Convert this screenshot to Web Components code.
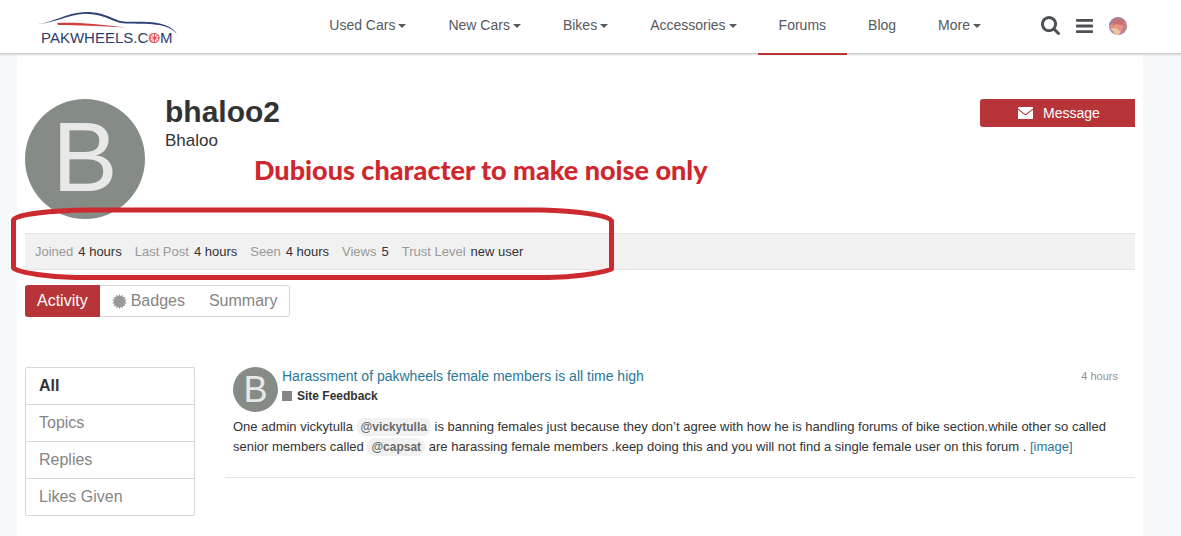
<!DOCTYPE html>
<html lang="en">
<head>
<meta charset="utf-8">
<meta name="viewport" content="width=device-width, initial-scale=1">
<title>bhaloo2 - PakWheels Forums</title>
<style>
  body {
    margin: 0;
    min-height: 100vh;
    background: #f7f8fa;
    color: #333;
    font-family: "Liberation Sans", Arial, sans-serif;
    font-size: 13px;
    --accent: #b73439;
    --link: #2a7799;
    --line: #d8d8d8;
    --muted: #858585;
  }
</style>
</head>
<body>

<site-header>
  <nav-item menu>Used Cars</nav-item>
  <nav-item menu>New Cars</nav-item>
  <nav-item menu>Bikes</nav-item>
  <nav-item menu>Accessories</nav-item>
  <nav-item active>Forums</nav-item>
  <nav-item>Blog</nav-item>
  <nav-item menu>More</nav-item>
</site-header>

<profile-page>
  <profile-header slot="header" username="bhaloo2" name="Bhaloo"></profile-header>

  <stat-bar slot="stats">
    <stat-item label="Joined">4 hours</stat-item>
    <stat-item label="Last Post">4 hours</stat-item>
    <stat-item label="Seen">4 hours</stat-item>
    <stat-item label="Views">5</stat-item>
    <stat-item label="Trust Level">new user</stat-item>
  </stat-bar>

  <tab-bar slot="tabs">
    <tab-link active>Activity</tab-link>
    <tab-link><fa-icon name="certificate"></fa-icon>Badges</tab-link>
    <tab-link>Summary</tab-link>
  </tab-bar>

  <side-nav slot="side">
    <side-link active>All</side-link>
    <side-link>Topics</side-link>
    <side-link>Replies</side-link>
    <side-link>Likes Given</side-link>
  </side-nav>

  <stream-item category="Site Feedback" when="4 hours">
    <span slot="title">Harassment of pakwheels female members is all time high</span>
    One admin vickytulla <user-mention>@vickytulla</user-mention> is banning females just because they don’t agree with how he is handling forums of bike section.while other so called senior members called <user-mention>@capsat</user-mention> are harassing female members .keep doing this and you will not find a single female user on this forum . <text-link>[image]</text-link>
  </stream-item>

  <pen-note slot="note">Dubious character to make noise only</pen-note>
</profile-page>

<script>
// Small helper: define an element whose shadow root comes from a template
function define(name, html, setup) {
  const template = document.createElement('template');
  template.innerHTML = html;

  customElements.define(name, class extends HTMLElement {
    constructor() {
      super();
      this.attachShadow({ mode: 'open' });
      this.shadowRoot.appendChild(template.content.cloneNode(true));
    }

    connectedCallback() {
      if (setup) setup(this, this.shadowRoot);
    }
  });
}

// Pointed burst for the badges icon
function burst(points, outer, inner) {
  return Array.from({ length: points * 2 }, (_, i) => {
    const r = i % 2 ? inner : outer;
    const a = Math.PI * i / points;
    return `${(8 + r * Math.sin(a)).toFixed(2)} ${(8 - r * Math.cos(a)).toFixed(2)}`;
  }).join('L');
}

const icons = {
  search: {
    box: '64 128 1664 1664', w: 19, h: 19,
    d: 'M1216 832q0-185-131.5-316.5T768 384 451.5 515.5 320 832t131.5 316.5T768 1280t316.5-131.5T1216 832zm512 832q0 52-38 90t-90 38q-54 0-90-38l-343-342q-179 124-399 124-143 0-273.5-55.5t-225-150-150-225T64 832t55.5-273.5 150-225 225-150T768 128t273.5 55.5 225 150 150 225T1472 832q0 220-124 399l343 343q37 37 37 90z'
  },
  bars: {
    box: '128 256 1536 1280', w: 17, h: 14,
    d: 'M1664 1344v128q0 26-19 45t-45 19H192q-26 0-45-19t-19-45v-128q0-26 19-45t45-19h1408q26 0 45 19t19 45zm0-512v128q0 26-19 45t-45 19H192q-26 0-45-19t-19-45V832q0-26 19-45t45-19h1408q26 0 45 19t19 45zm0-512v128q0 26-19 45t-45 19H192q-26 0-45-19t-19-45V320q0-26 19-45t45-19h1408q26 0 45 19t19 45z'
  },
  envelope: {
    box: '0 0 14 11', w: 15, h: 12,
    d: 'M0 .6Q0 0 .6 0H13.4Q14 0 14 .6V1.4L7.6 6.2Q7 6.6 6.4 6.2L0 1.4ZM0 2.5L6 7.1Q7 7.8 8 7.1L14 2.5V10.4Q14 11 13.4 11H.6Q0 11 0 10.4Z'
  },
  certificate: {
    box: '0 0 16 16', w: 15, h: 15,
    d: 'M' + burst(14, 8, 5.8) + 'Z'
  }
};

define('fa-icon', `
  <style>
    :host { display: inline-block; line-height: 0; }
    svg { display: block; fill: currentColor; }
  </style>
  <svg aria-hidden="true"><path/></svg>
`, (el, root) => {
  const icon = icons[el.getAttribute('name')];
  const svg = root.querySelector('svg');
  svg.setAttribute('viewBox', icon.box);
  svg.setAttribute('width', icon.w);
  svg.setAttribute('height', icon.h);
  svg.setAttribute('preserveAspectRatio', 'none');
  root.querySelector('path').setAttribute('d', icon.d);
});

define('site-logo', `
  <style>
    :host { display: block; }
    a, svg { display: block; }
    text { font: 15px "Liberation Sans", Arial, sans-serif; fill: #2c3d6b; }
    .o { fill: #e0404a; }
  </style>
  <a href="#" aria-label="PakWheels home">
    <svg width="142" height="36" viewBox="0 0 142 36">
      <path d="M0 14C17 12 27 3 47 2C68 1.500 76 11 86 11.500C100 13 128 8 139 24C129 12 110 14.500 88 13.500C74 13 68 4 47 3.800C28 5 18 13 0 14Z" fill="#2c4377"/>
      <path d="M19 13C38 12 58 14 88 17.500C60 16 40 15 20 15Z" fill="#cf3f3f"/>
      <text x="3" y="33">PAKWHEELS.C<tspan class="o">O</tspan>M</text>
      <circle cx="116.500" cy="28" r="5" fill="#fff"/>
      <g fill="none" stroke="#e0404a">
        <circle cx="116.500" cy="28" r="4.500"/>
        <circle cx="116.500" cy="28" r="1"/>
        <path d="M116.500 23V33M111.500 28H121.500M113 24.500L120 31.500M120 24.500L113 31.500" stroke-width=".8"/>
      </g>
    </svg>
  </a>
`);

define('nav-item', `
  <style>
    :host { display: block; font-size: 14px; line-height: 18px; }
    a {
      display: flex;
      align-items: center;
      gap: 3px;
      padding: 16px 21px 19px;
      border-bottom: 2px solid transparent;
      color: #56595e;
      text-decoration: none;
    }
    :host([active]) a { border-color: var(--accent); }
    i { display: none; margin-top: 2px; border: 4px solid transparent; border-top-color: currentColor; border-bottom: 0; }
    :host([menu]) i { display: block; }
  </style>
  <a href="#"><slot></slot><i></i></a>
`);

define('site-header', `
  <style>
    :host { display: block; position: relative; z-index: 1; }
    header {
      display: flex;
      height: 53px;
      padding: 0 54px 0 38px;
      background: #fff;
      border-bottom: 1px solid #ccc;
      box-shadow: 0 1px 2px rgba(0, 0, 0, .15);
    }
    site-logo { margin-top: 10px; }
    nav { display: flex; margin-left: auto; }
    .tools { display: flex; align-items: center; gap: 16px; margin-left: 39px; padding-bottom: 2px; color: #4d5055; }
    button { display: flex; padding: 0; border: 0; background: none; color: inherit; }
    .me { border-radius: 50%; overflow: hidden; }
    .me svg { display: block; }
  </style>
  <header>
    <site-logo></site-logo>
    <nav aria-label="Main"><slot></slot></nav>
    <div class="tools">
      <button aria-label="Search"><fa-icon name="search"></fa-icon></button>
      <button aria-label="Menu"><fa-icon name="bars"></fa-icon></button>
      <button class="me" aria-label="Account">
        <svg width="18" height="18" viewBox="0 0 18 18">
          <rect width="18" height="18" fill="#c98a90"/>
          <path d="M0 0H18V6L12 4L6 6L0 8Z" fill="#a486a4"/>
          <path d="M5 2L14 3L16 9L9 7L3 10Z" fill="#cf6f6c"/>
          <path d="M1 9L8 7L15 10L13 15L6 12Z" fill="#e8937d"/>
          <path d="M2 11L7 11L12 15L9 18H4Z" fill="#f0c5a2"/>
          <path d="M0 11L4 14L6 18H0Z" fill="#9a91b8"/>
          <path d="M14 10L18 8V18H11Z" fill="#bd828e"/>
        </svg>
      </button>
    </div>
  </header>
`);

define('user-avatar', `
  <style>
    :host {
      display: flex;
      flex: none;
      align-items: center;
      justify-content: center;
      width: 45px;
      height: 45px;
      border-radius: 50%;
      background: #858c85;
      color: #e8e8e8;
      font-size: 36px;
      line-height: 45px;
    }
    :host([large]) { width: 120px; height: 120px; font-size: 98px; line-height: 116px; align-items: flex-start; }
  </style>
  <span>B</span>
`);

define('profile-header', `
  <style>
    :host { display: flex; gap: 20px; align-items: flex-start; }
    h1 { margin: 0 0 6px; font-size: 30px; line-height: 26px; }
    h2 { margin: 0; font-size: 17px; line-height: 20px; font-weight: normal; }
    button {
      display: flex;
      align-items: center;
      justify-content: center;
      gap: 10px;
      width: 155px;
      height: 28px;
      margin-left: auto;
      padding: 0 0 0 3px;
      border: 0;
      border-radius: 3px 0 0 3px;
      background: var(--accent);
      color: #fff;
      font: 14px "Liberation Sans", Arial, sans-serif;
    }
  </style>
  <user-avatar large></user-avatar>
  <div>
    <h1></h1>
    <h2></h2>
  </div>
  <button><fa-icon name="envelope"></fa-icon>Message</button>
`, (el, root) => {
  root.querySelector('h1').textContent = el.getAttribute('username');
  root.querySelector('h2').textContent = el.getAttribute('name');
});

define('stat-item', `
  <style>
    :host { display: flex; gap: 5px; }
    dt { color: #999; }
    dd { margin: 0; }
  </style>
  <dt></dt>
  <dd><slot></slot></dd>
`, (el, root) => {
  root.querySelector('dt').textContent = el.getAttribute('label');
});

define('stat-bar', `
  <style>
    :host { display: block; background: #f1f1f1; border: solid #e5e5e5; border-width: 1px 0; }
    dl { display: flex; flex-wrap: wrap; gap: 13px; margin: 0; padding: 8px 10px 7px; line-height: 20px; }
  </style>
  <dl><slot></slot></dl>
`);

define('tab-link', `
  <style>
    :host { display: block; font-size: 16px; line-height: 30px; }
    a { display: flex; align-items: center; gap: 4px; padding: 0 12px; color: var(--muted); text-decoration: none; }
    :host([active]) { margin: -1px 0 -1px -1px; line-height: 32px; }
    :host([active]) a { background: var(--accent); color: #fff; border-radius: 3px 0 0 3px; }
    ::slotted(fa-icon) { color: #999; }
  </style>
  <a href="#"><slot></slot></a>
`);

define('tab-bar', `
  <style>
    :host { display: flex; }
    nav { display: flex; border: 1px solid var(--line); border-radius: 3px; }
  </style>
  <nav aria-label="Profile"><slot></slot></nav>
`);

define('side-link', `
  <style>
    :host { display: block; border-bottom: 1px solid var(--line); }
    a { display: block; padding: 0 13px; color: var(--muted); font-size: 16px; line-height: 36px; text-decoration: none; }
    :host([active]) a { color: #333; font-weight: bold; }
  </style>
  <a href="#"><slot></slot></a>
`);

define('side-nav', `
  <style>
    :host { display: block; border: 1px solid var(--line); border-bottom: 0; border-radius: 2px; }
  </style>
  <nav aria-label="Activity filter"><slot></slot></nav>
`);

define('text-link', `
  <style>
    :host { display: inline; }
    a { color: var(--link); text-decoration: none; }
  </style>
  <a href="#"><slot></slot></a>
`);

define('user-mention', `
  <style>
    :host { display: inline; }
    a { padding: 2px 4px; border-radius: 8px; background: #f1f1f1; color: #6b6b6b; font-size: 12px; font-weight: bold; text-decoration: none; }
  </style>
  <a href="#"><slot></slot></a>
`);

define('stream-item', `
  <style>
    :host { display: block; padding: 0 0 20px 8px; border-bottom: 1px solid #e5e5e5; }
    .top { display: flex; gap: 4px; }
    .title { display: block; font-size: 14px; line-height: 19px; }
    .category { display: flex; align-items: center; gap: 5px; font-size: 12px; font-weight: bold; line-height: 20px; }
    .category::before { content: ""; width: 10px; height: 10px; background: #858585; }
    time { margin-left: auto; padding-right: 17px; color: #919191; font-size: 11px; line-height: 19px; }
    p { margin: 5px 20px 0 0; line-height: 20px; }
  </style>
  <article>
    <div class="top">
      <user-avatar></user-avatar>
      <div>
        <text-link class="title"><slot name="title"></slot></text-link>
        <div class="category"></div>
      </div>
      <time></time>
    </div>
    <p><slot></slot></p>
  </article>
`, (el, root) => {
  root.querySelector('.category').textContent = el.getAttribute('category');
  root.querySelector('time').textContent = el.getAttribute('when');
});

// Freehand red marker: a caption and a loop drawn over the stats
define('pen-note', `
  <style>
    :host { display: block; position: absolute; left: -6px; top: 96px; pointer-events: none; }
    p { margin: 0 0 0 243px; color: #cf272e; font: 900 27px/40px Lato, Calibri, sans-serif; white-space: nowrap; }
    svg { display: block; margin-top: 16px; }
  </style>
  <p><slot></slot></p>
  <svg width="606" height="78" viewBox="0 0 606 78" fill="none" stroke="#cc2a2f" stroke-width="5" stroke-linejoin="round">
    <path d="M2.500 14C5 8 40 4.500 78 4H530C565 5 598 9 600.500 15V63C588 68 560 71 538 71.500H64C40 71 8 67 2.500 62Z"/>
  </svg>
`);

define('profile-page', `
  <style>
    :host { display: block; position: relative; margin: 0 38px 0 17px; }
    main { box-sizing: border-box; min-height: calc(100vh - 54px); padding: 45px 8px 20px; background: #fff; }
    ::slotted([slot="stats"]) { margin-top: 14px; }
    ::slotted([slot="tabs"]) { margin-top: 15px; }
    .columns { display: grid; grid-template-columns: 170px 1fr; gap: 30px; align-items: start; margin-top: 50px; }
  </style>
  <main>
    <slot name="header"></slot>
    <slot name="stats"></slot>
    <slot name="tabs"></slot>
    <div class="columns">
      <slot name="side"></slot>
      <slot></slot>
    </div>
    <slot name="note"></slot>
  </main>
`);
</script>
</body>
</html>
